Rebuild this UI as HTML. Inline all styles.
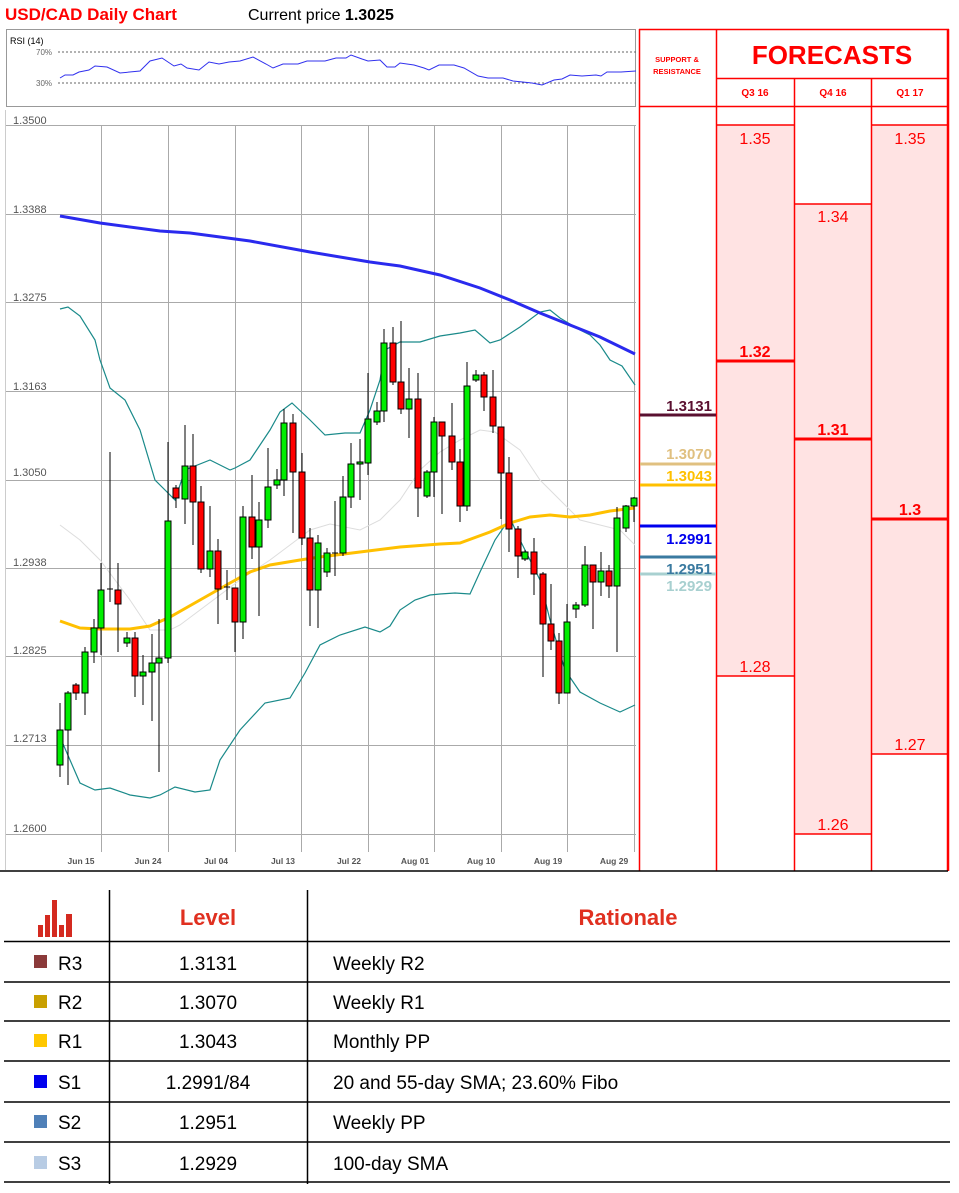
<!DOCTYPE html>
<html><head><meta charset="utf-8"><style>
body{margin:0;background:#fff;}
svg{display:block;font-family:"Liberation Sans",sans-serif;}
</style></head><body>
<svg width="959" height="1193" viewBox="0 0 959 1193" xmlns="http://www.w3.org/2000/svg">
<text x="5" y="20" font-size="17" font-weight="bold" fill="#ff0000">USD/CAD Daily Chart</text>
<text x="248" y="20" font-size="16" fill="#000">Current price <tspan font-weight="bold">1.3025</tspan></text>
<!-- RSI -->
<rect x="6.5" y="29.5" width="629" height="77" fill="#fff" stroke="#999"/>
<text x="10" y="44" font-size="9" fill="#000">RSI (14)</text>
<line x1="58" y1="52" x2="636" y2="52" stroke="#666" stroke-dasharray="2,2"/>
<line x1="58" y1="83" x2="636" y2="83" stroke="#666" stroke-dasharray="2,2"/>
<text x="36" y="55" font-size="8" fill="#666">70%</text>
<text x="36" y="86" font-size="8" fill="#666">30%</text>
<polyline fill="none" stroke="#3030ee" stroke-width="1" points="60,78 65,75 73,75 79,72 89,70 95,66 107,67 120,73 140,71 150,61 162,58 174,66 181,64 187,68 199,70 209,62 219,64 229,62 240,61 253,57 266,64 273,68 283,64 298,64 307,61 325,61 336,58 346,58 351,55 362,59 368,61 380,60 387,67 395,67 400,63 414,65 424,68 429,70 439,65 454,65 464,68 478,76 488,78 503,78 513,81 532,83 542,85 554,80 562,79 570,75 582,76 596,75 601,76 607,72 621,72 636,71"/>
<!-- grid -->
<g stroke="#aaa" stroke-width="1">
<line x1="5" y1="125.5" x2="636" y2="125.5"/><line x1="5" y1="214.5" x2="636" y2="214.5"/><line x1="5" y1="302.5" x2="636" y2="302.5"/><line x1="5" y1="391.5" x2="636" y2="391.5"/><line x1="5" y1="480.5" x2="636" y2="480.5"/><line x1="5" y1="568.5" x2="636" y2="568.5"/><line x1="5" y1="656.5" x2="636" y2="656.5"/><line x1="5" y1="745.5" x2="636" y2="745.5"/><line x1="5" y1="834.5" x2="636" y2="834.5"/>
<line x1="101.5" y1="125" x2="101.5" y2="852"/><line x1="168.5" y1="125" x2="168.5" y2="852"/><line x1="235.5" y1="125" x2="235.5" y2="852"/><line x1="301.5" y1="125" x2="301.5" y2="852"/><line x1="368.5" y1="125" x2="368.5" y2="852"/><line x1="434.5" y1="125" x2="434.5" y2="852"/><line x1="501.5" y1="125" x2="501.5" y2="852"/><line x1="567.5" y1="125" x2="567.5" y2="852"/><line x1="634.5" y1="125" x2="634.5" y2="852"/>
</g>
<line x1="5.5" y1="110" x2="5.5" y2="870" stroke="#ccc"/>
<g font-size="11" fill="#555">
<text x="13" y="124">1.3500</text><text x="13" y="213">1.3388</text><text x="13" y="301">1.3275</text><text x="13" y="390">1.3163</text><text x="13" y="476">1.3050</text><text x="13" y="566">1.2938</text><text x="13" y="654">1.2825</text><text x="13" y="742">1.2713</text><text x="13" y="832">1.2600</text>
</g>
<g font-size="8.5" font-weight="bold" fill="#555" text-anchor="middle">
<text x="81" y="864">Jun 15</text><text x="148" y="864">Jun 24</text><text x="216" y="864">Jul 04</text><text x="283" y="864">Jul 13</text><text x="349" y="864">Jul 22</text><text x="415" y="864">Aug 01</text><text x="481" y="864">Aug 10</text><text x="548" y="864">Aug 19</text><text x="614" y="864">Aug 29</text>
</g>
<!-- indicators -->
<polyline fill="none" stroke="#ddd" stroke-width="1" points="60,525 80,540 100,560 130,600 150,630 170,630 180,625 200,610 240,580 270,560 290,545 310,530 330,524 360,530 380,520 400,500 420,470 440,452 460,440 480,430 495,432 520,450 540,480 560,500 580,520 600,525 620,530 635,545"/>
<polyline fill="none" stroke="#1a8a8a" stroke-width="1.2" points="60,309 68,307 80,316 95,340 100,360 110,388 125,400 140,430 155,480 165,490 175,500 185,470 210,460 230,470 235,468 250,460 270,430 280,412 292,403 310,420 325,435 345,433 360,433 370,410 380,380 385,350 400,342 420,342 440,336 460,333 475,330 490,343 500,340 520,327 540,312 550,310 560,318 580,330 590,335 600,345 610,360 622,366 635,385"/>
<polyline fill="none" stroke="#1a8a8a" stroke-width="1.2" points="60,737 70,760 80,783 95,790 110,788 130,795 150,798 160,795 175,787 195,792 210,790 220,760 240,730 265,703 290,698 305,673 320,645 340,635 365,627 380,632 390,626 400,610 415,600 430,595 440,594 455,593 470,594 480,572 495,540 510,518 520,540 540,580 550,620 565,670 580,692 600,703 620,712 635,705"/>
<polyline fill="none" stroke="#2a2aee" stroke-width="3" points="60,216 100,223 160,231 190,233 250,241 310,252 370,262 400,266 440,275 480,288 510,300 540,313 570,325 600,337 635,354"/>
<polyline fill="none" stroke="#ffc000" stroke-width="3" points="60,621 80,628 100,629 130,629 150,626 170,617 200,600 230,583 250,572 270,565 300,560 320,557 360,552 400,547 440,544 460,543 490,532 510,523 530,517 550,515 570,517 590,515 610,511 635,508"/>
<!-- candles -->
<g stroke="#000" stroke-width="1">
<line x1="60" y1="703" x2="60" y2="777"/><rect x="57" y="730" width="6" height="35" fill="#00ee00"/>
<line x1="68" y1="691" x2="68" y2="785"/><rect x="65" y="693" width="6" height="37" fill="#00ee00"/>
<line x1="76" y1="683" x2="76" y2="700"/><rect x="73" y="685" width="6" height="8" fill="#f00"/>
<line x1="85" y1="647" x2="85" y2="715"/><rect x="82" y="652" width="6" height="41" fill="#00ee00"/>
<line x1="94" y1="619" x2="94" y2="663"/><rect x="91" y="628" width="6" height="24" fill="#00ee00"/>
<line x1="101" y1="563" x2="101" y2="655"/><rect x="98" y="590" width="6" height="38" fill="#00ee00"/>
<line x1="110" y1="452" x2="110" y2="602"/><line x1="107" y1="589" x2="113" y2="589"/>
<line x1="118" y1="563" x2="118" y2="652"/><rect x="115" y="590" width="6" height="14" fill="#f00"/>
<line x1="127" y1="632" x2="127" y2="647"/><rect x="124" y="638" width="6" height="5" fill="#00ee00"/>
<line x1="135" y1="632" x2="135" y2="697"/><rect x="132" y="638" width="6" height="38" fill="#f00"/>
<line x1="143" y1="655" x2="143" y2="705"/><rect x="140" y="672" width="6" height="4" fill="#00ee00"/>
<line x1="152" y1="634" x2="152" y2="721"/><rect x="149" y="663" width="6" height="9" fill="#00ee00"/>
<line x1="159" y1="619" x2="159" y2="772"/><rect x="156" y="658" width="6" height="5" fill="#00ee00"/>
<line x1="168" y1="442" x2="168" y2="663"/><rect x="165" y="521" width="6" height="137" fill="#00ee00"/>
<line x1="176" y1="485" x2="176" y2="508"/><rect x="173" y="488" width="6" height="10" fill="#f00"/>
<line x1="185" y1="425" x2="185" y2="524"/><rect x="182" y="466" width="6" height="33" fill="#00ee00"/>
<line x1="193" y1="434" x2="193" y2="545"/><rect x="190" y="466" width="6" height="36" fill="#f00"/>
<line x1="201" y1="486" x2="201" y2="573"/><rect x="198" y="502" width="6" height="67" fill="#f00"/>
<line x1="210" y1="506" x2="210" y2="577"/><rect x="207" y="551" width="6" height="18" fill="#00ee00"/>
<line x1="218" y1="539" x2="218" y2="624"/><rect x="215" y="551" width="6" height="38" fill="#f00"/>
<line x1="227" y1="570" x2="227" y2="600"/><line x1="224" y1="587" x2="230" y2="587"/>
<line x1="235" y1="588" x2="235" y2="652"/><rect x="232" y="588" width="6" height="34" fill="#f00"/>
<line x1="243" y1="506" x2="243" y2="639"/><rect x="240" y="517" width="6" height="105" fill="#00ee00"/>
<line x1="252" y1="475" x2="252" y2="559"/><rect x="249" y="517" width="6" height="30" fill="#f00"/>
<line x1="259" y1="502" x2="259" y2="616"/><rect x="256" y="520" width="6" height="27" fill="#00ee00"/>
<line x1="268" y1="448" x2="268" y2="528"/><rect x="265" y="487" width="6" height="33" fill="#00ee00"/>
<line x1="277" y1="469" x2="277" y2="489"/><rect x="274" y="480" width="6" height="5" fill="#00ee00"/>
<line x1="284" y1="409" x2="284" y2="496"/><rect x="281" y="423" width="6" height="57" fill="#00ee00"/>
<line x1="293" y1="414" x2="293" y2="533"/><rect x="290" y="423" width="6" height="49" fill="#f00"/>
<line x1="302" y1="453" x2="302" y2="545"/><rect x="299" y="472" width="6" height="66" fill="#f00"/>
<line x1="310" y1="528" x2="310" y2="626"/><rect x="307" y="538" width="6" height="52" fill="#f00"/>
<line x1="318" y1="535" x2="318" y2="628"/><rect x="315" y="543" width="6" height="47" fill="#00ee00"/>
<line x1="327" y1="548" x2="327" y2="577"/><rect x="324" y="553" width="6" height="19" fill="#00ee00"/>
<line x1="335" y1="501" x2="335" y2="576"/><line x1="332" y1="553" x2="338" y2="553"/>
<line x1="343" y1="476" x2="343" y2="556"/><rect x="340" y="497" width="6" height="56" fill="#00ee00"/>
<line x1="351" y1="443" x2="351" y2="508"/><rect x="348" y="464" width="6" height="33" fill="#00ee00"/>
<line x1="360" y1="439" x2="360" y2="500"/><rect x="357" y="462" width="6" height="2" fill="#00ee00"/>
<line x1="368" y1="373" x2="368" y2="475"/><rect x="365" y="419" width="6" height="44" fill="#00ee00"/>
<line x1="377" y1="402" x2="377" y2="425"/><rect x="374" y="411" width="6" height="11" fill="#00ee00"/>
<line x1="384" y1="329" x2="384" y2="422"/><rect x="381" y="343" width="6" height="68" fill="#00ee00"/>
<line x1="393" y1="327" x2="393" y2="385"/><rect x="390" y="343" width="6" height="39" fill="#f00"/>
<line x1="401" y1="321" x2="401" y2="414"/><rect x="398" y="382" width="6" height="27" fill="#f00"/>
<line x1="409" y1="368" x2="409" y2="438"/><rect x="406" y="399" width="6" height="10" fill="#00ee00"/>
<line x1="418" y1="373" x2="418" y2="517"/><rect x="415" y="399" width="6" height="89" fill="#f00"/>
<line x1="427" y1="470" x2="427" y2="498"/><rect x="424" y="472" width="6" height="24" fill="#00ee00"/>
<line x1="434" y1="417" x2="434" y2="497"/><rect x="431" y="422" width="6" height="50" fill="#00ee00"/>
<line x1="442" y1="422" x2="442" y2="514"/><rect x="439" y="422" width="6" height="14" fill="#f00"/>
<line x1="452" y1="403" x2="452" y2="470"/><rect x="449" y="436" width="6" height="26" fill="#f00"/>
<line x1="460" y1="449" x2="460" y2="522"/><rect x="457" y="462" width="6" height="44" fill="#f00"/>
<line x1="467" y1="362" x2="467" y2="511"/><rect x="464" y="386" width="6" height="120" fill="#00ee00"/>
<line x1="476" y1="370" x2="476" y2="382"/><rect x="473" y="375" width="6" height="5" fill="#00ee00"/>
<line x1="484" y1="372" x2="484" y2="411"/><rect x="481" y="375" width="6" height="22" fill="#f00"/>
<line x1="493" y1="370" x2="493" y2="433"/><rect x="490" y="397" width="6" height="29" fill="#f00"/>
<line x1="501" y1="427" x2="501" y2="519"/><rect x="498" y="427" width="6" height="46" fill="#f00"/>
<line x1="509" y1="457" x2="509" y2="552"/><rect x="506" y="473" width="6" height="56" fill="#f00"/>
<line x1="518" y1="526" x2="518" y2="578"/><rect x="515" y="529" width="6" height="27" fill="#f00"/>
<line x1="525" y1="550" x2="525" y2="561"/><rect x="522" y="552" width="6" height="7" fill="#00ee00"/>
<line x1="534" y1="538" x2="534" y2="595"/><rect x="531" y="552" width="6" height="22" fill="#f00"/>
<line x1="543" y1="572" x2="543" y2="677"/><rect x="540" y="574" width="6" height="50" fill="#f00"/>
<line x1="551" y1="584" x2="551" y2="650"/><rect x="548" y="624" width="6" height="17" fill="#f00"/>
<line x1="559" y1="633" x2="559" y2="704"/><rect x="556" y="641" width="6" height="52" fill="#f00"/>
<line x1="567" y1="604" x2="567" y2="693"/><rect x="564" y="622" width="6" height="71" fill="#00ee00"/>
<line x1="576" y1="602" x2="576" y2="618"/><rect x="573" y="605" width="6" height="4" fill="#00ee00"/>
<line x1="585" y1="546" x2="585" y2="607"/><rect x="582" y="565" width="6" height="40" fill="#00ee00"/>
<line x1="593" y1="565" x2="593" y2="629"/><rect x="590" y="565" width="6" height="17" fill="#f00"/>
<line x1="601" y1="552" x2="601" y2="596"/><rect x="598" y="571" width="6" height="11" fill="#00ee00"/>
<line x1="609" y1="565" x2="609" y2="598"/><rect x="606" y="571" width="6" height="15" fill="#f00"/>
<line x1="617" y1="507" x2="617" y2="652"/><rect x="614" y="518" width="6" height="68" fill="#00ee00"/>
<line x1="626" y1="505" x2="626" y2="532"/><rect x="623" y="506" width="6" height="22" fill="#00ee00"/>
<line x1="634" y1="497" x2="634" y2="522"/><rect x="631" y="498" width="6" height="8" fill="#00ee00"/>
</g>
<!-- right panel -->
<rect x="717" y="125" width="77" height="551" fill="#ffe3e3"/>
<rect x="795" y="204" width="76" height="630" fill="#ffe3e3"/>
<rect x="872" y="125" width="76" height="629" fill="#ffe3e3"/>
<g stroke="#f00" stroke-width="1.5">
<line x1="639.5" y1="29" x2="639.5" y2="871"/>
<line x1="716.5" y1="29" x2="716.5" y2="871"/>
<line x1="794.5" y1="78" x2="794.5" y2="871"/>
<line x1="871.5" y1="78" x2="871.5" y2="871"/>
<line x1="639" y1="29.5" x2="949" y2="29.5"/>
<line x1="716" y1="78.5" x2="949" y2="78.5"/>
<line x1="639" y1="106.5" x2="949" y2="106.5"/>
<line x1="716" y1="125" x2="794" y2="125"/><line x1="716" y1="676" x2="794" y2="676"/>
<line x1="794" y1="204" x2="871" y2="204"/><line x1="794" y1="834" x2="871" y2="834"/>
<line x1="871" y1="125" x2="948" y2="125"/><line x1="871" y1="754" x2="948" y2="754"/>
</g>
<line x1="948" y1="29" x2="948" y2="871" stroke="#f00" stroke-width="2.5"/>
<g stroke="#f00" stroke-width="3">
<line x1="717" y1="361" x2="794" y2="361"/><line x1="795" y1="439" x2="871" y2="439"/><line x1="872" y1="519" x2="948" y2="519"/>
</g>
<g fill="#f00" text-anchor="middle">
<text x="677" y="62" font-size="7.5" font-weight="bold">SUPPORT &amp;</text>
<text x="677" y="74" font-size="7.5" font-weight="bold">RESISTANCE</text>
<text x="832" y="64" font-size="26" font-weight="bold">FORECASTS</text>
<text x="755" y="96" font-size="10" font-weight="bold">Q3 16</text>
<text x="833" y="96" font-size="10" font-weight="bold">Q4 16</text>
<text x="910" y="96" font-size="10" font-weight="bold">Q1 17</text>
<g font-size="16">
<text x="755" y="144">1.35</text><text x="910" y="144">1.35</text><text x="833" y="222">1.34</text>
<text x="755" y="357" font-weight="bold">1.32</text><text x="833" y="435" font-weight="bold">1.31</text><text x="910" y="515" font-weight="bold">1.3</text>
<text x="755" y="672">1.28</text><text x="910" y="750">1.27</text><text x="833" y="830">1.26</text>
</g></g>
<g stroke-width="3">
<line x1="640" y1="415" x2="716" y2="415" stroke="#5a1030"/>
<line x1="640" y1="464" x2="716" y2="464" stroke="#e0c080"/>
<line x1="640" y1="485" x2="716" y2="485" stroke="#ffc000"/>
<line x1="640" y1="526" x2="716" y2="526" stroke="#0000ee"/>
<line x1="640" y1="557" x2="716" y2="557" stroke="#3a7aa0"/>
<line x1="640" y1="574" x2="716" y2="574" stroke="#a8d0d0"/>
</g>
<g font-size="15" font-weight="bold" text-anchor="end">
<text x="712" y="411" fill="#5a1030">1.3131</text>
<text x="712" y="459" fill="#e0c080">1.3070</text>
<text x="712" y="481" fill="#ffc000">1.3043</text>
<text x="712" y="544" fill="#0000ee">1.2991</text>
<text x="712" y="574" fill="#3a7aa0">1.2951</text>
<text x="712" y="591" fill="#a8d0d0">1.2929</text>
</g>
<line x1="0" y1="871" x2="948" y2="871" stroke="#000" stroke-width="1.5"/>
<!-- table -->
<g fill="#d42a20">
<rect x="38" y="925" width="5" height="12"/><rect x="45" y="915" width="5" height="22"/><rect x="52" y="900" width="5" height="37"/><rect x="59" y="925" width="5" height="12"/><rect x="66" y="914" width="6" height="23"/>
</g>
<g stroke="#000" stroke-width="1.5">
<line x1="109.5" y1="890" x2="109.5" y2="1184"/><line x1="307.5" y1="890" x2="307.5" y2="1184"/>
<line x1="4" y1="941.5" x2="950" y2="941.5"/><line x1="4" y1="982" x2="950" y2="982"/><line x1="4" y1="1021" x2="950" y2="1021"/><line x1="4" y1="1061" x2="950" y2="1061"/><line x1="4" y1="1102" x2="950" y2="1102"/><line x1="4" y1="1142" x2="950" y2="1142"/><line x1="4" y1="1182" x2="950" y2="1182"/>
</g>
<text x="208" y="925" font-size="22" font-weight="bold" fill="#e03020" text-anchor="middle">Level</text>
<text x="628" y="925" font-size="22" font-weight="bold" fill="#e03020" text-anchor="middle">Rationale</text>
<rect x="34" y="955" width="13" height="13" fill="#8b3a3a"/>
<rect x="34" y="995" width="13" height="13" fill="#c9a000"/>
<rect x="34" y="1034" width="13" height="13" fill="#ffc800"/>
<rect x="34" y="1075" width="13" height="13" fill="#0000ee"/>
<rect x="34" y="1115" width="13" height="13" fill="#4f80b8"/>
<rect x="34" y="1156" width="13" height="13" fill="#b8cce4"/>
<g font-size="19" fill="#000">
<text x="58" y="970">R3</text><text x="58" y="1009">R2</text><text x="58" y="1048">R1</text><text x="58" y="1089">S1</text><text x="58" y="1129">S2</text><text x="58" y="1170">S3</text>
<g text-anchor="middle"><text x="208" y="970">1.3131</text><text x="208" y="1009">1.3070</text><text x="208" y="1048">1.3043</text><text x="208" y="1089">1.2991/84</text><text x="208" y="1129">1.2951</text><text x="208" y="1170">1.2929</text></g>
<text x="333" y="970">Weekly R2</text><text x="333" y="1009">Weekly R1</text><text x="333" y="1048">Monthly PP</text><text x="333" y="1089">20 and 55-day SMA; 23.60% Fibo</text><text x="333" y="1129">Weekly PP</text><text x="333" y="1170">100-day SMA</text>
</g>
</svg>
</body></html>
